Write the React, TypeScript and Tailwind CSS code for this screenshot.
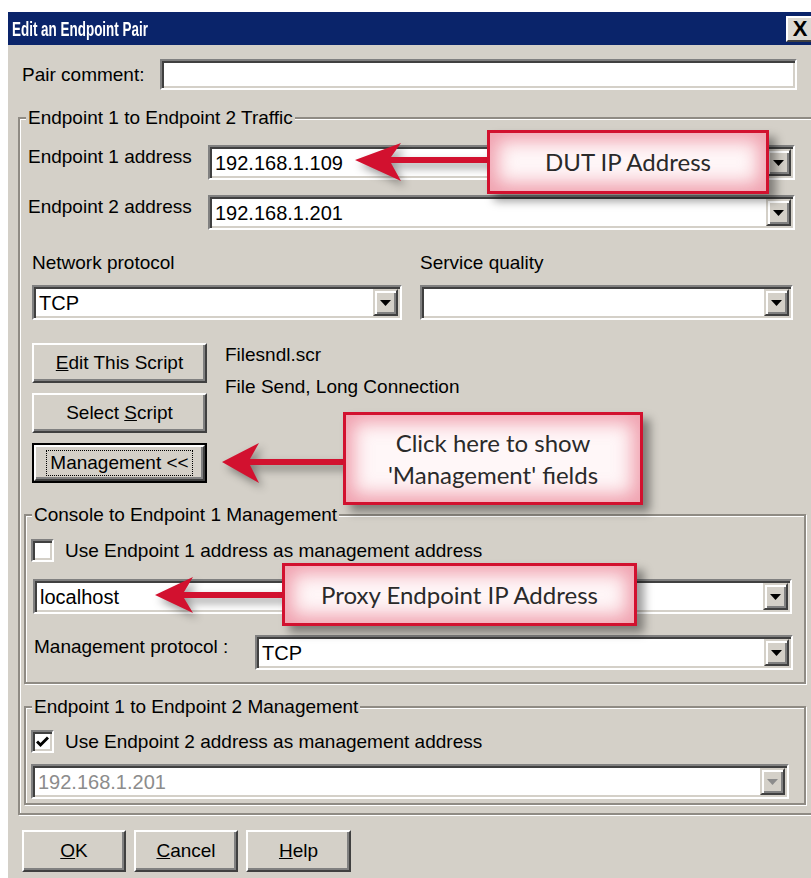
import React from "react";

type Kids = { children?: React.ReactNode; className?: string };

// white, sunken edit area with the classic two-tone bevel
function Sunken({ children, className = "" }: Kids) {
  return (
    <div
      className={`flex items-stretch bg-white p-[2px] border-2 border-t-[#808080] border-l-[#808080] border-b-white border-r-white shadow-[inset_2px_2px_0_#404040,inset_-2px_-2px_0_#d4d0c8] ${className}`}
    >
      {children}
    </div>
  );
}

function DropButton({ disabled }: { disabled?: boolean }) {
  return (
    <div className="ml-auto flex w-[25px] items-center justify-center border-2 border-t-[#d4d0c8] border-l-[#d4d0c8] border-b-[#404040] border-r-[#404040] bg-[#d4d0c8] shadow-[inset_2px_2px_0_#fff,inset_-2px_-2px_0_#808080]">
      <svg width="11" height="6" viewBox="0 0 11 6">
        <path d="M0 0h11L5.5 6z" fill={disabled ? "#8c8c8c" : "#000"} />
      </svg>
    </div>
  );
}

function Combo({
  value,
  className = "",
  disabled,
}: {
  value?: string;
  className?: string;
  disabled?: boolean;
}) {
  return (
    <Sunken className={`h-[35px] ${className}`}>
      <span
        className={`flex flex-1 items-center pl-[3px] text-[20px] ${
          disabled ? "text-[#8c8c8c]" : "text-black"
        }`}
      >
        {value}
      </span>
      <DropButton disabled={disabled} />
    </Sunken>
  );
}

function Btn({
  children,
  className = "",
  isDefault,
}: Kids & { isDefault?: boolean }) {
  return (
    <div className={`${isDefault ? "border-2 border-black" : ""} ${className}`}>
      <div className="flex h-full items-center justify-center border-2 border-t-white border-l-white border-b-[#404040] border-r-[#404040] bg-[#d4d0c8] shadow-[inset_-2px_-2px_0_#808080]">
        {isDefault ? (
          <span className="border border-dotted border-black px-[3px] leading-[24px]">
            {children}
          </span>
        ) : (
          children
        )}
      </div>
    </div>
  );
}

function Check({ checked }: { checked?: boolean }) {
  return (
    <div className="flex h-[23px] w-[23px] shrink-0 items-center justify-center border-2 border-t-[#808080] border-l-[#808080] border-b-white border-r-white bg-white shadow-[inset_2px_2px_0_#404040,inset_-2px_-2px_0_#d4d0c8]">
      {checked && (
        <svg width="13" height="12" viewBox="0 0 13 12">
          <path d="M1 5.5l3.5 3.5L12 1.5" fill="none" stroke="#000" strokeWidth="3" />
        </svg>
      )}
    </div>
  );
}

function Group({
  title,
  children,
  className = "",
}: Kids & { title: string }) {
  return (
    <fieldset
      className={`border-2 border-[#8f8b84] shadow-[inset_1px_1px_0_#fff,1px_1px_0_#fff] ${className}`}
    >
      <legend className="ml-[6px] bg-[#d4d0c8] px-[2px] leading-[22px]">{title}</legend>
      {children}
    </fieldset>
  );
}

function Callout({ children, className = "" }: Kids) {
  return (
    <div
      className={`absolute flex flex-col items-center justify-center border-[3px] border-[#d2112f] bg-[#fff7f8] font-['Lato',sans-serif] text-[24px] leading-[32px] text-[#2a2a2a] shadow-[inset_0_0_18px_8px_rgba(226,78,104,0.5),7px_7px_9px_rgba(0,0,0,0.4)] ${className}`}
    >
      {children}
    </div>
  );
}

export default function App() {
  return (
    <div className="relative h-[878px] w-[811px] overflow-hidden bg-white font-['Liberation_Sans',Arial,sans-serif] text-[19px] leading-[22px] text-black">
      <div className="ml-[8px] mt-[12px] w-[812px] bg-[#d4d0c8] pb-[40px]">
        {/* caption */}
        <div className="flex h-[33px] items-center bg-[#0a246a] pl-[4px] pr-[6px]">
          <span className="inline-block origin-left scale-x-[0.64] whitespace-nowrap text-[21px] font-bold text-white">
            Edit an Endpoint Pair
          </span>
          <div className="ml-auto flex h-[26px] w-[28px] items-center justify-center border-2 border-t-white border-l-white border-b-[#404040] border-r-[#404040] bg-[#dcd9d2] text-[22px] font-bold">
            X
          </div>
        </div>

        <div className="ml-[14px] mr-[23px] mt-[14px] flex h-[31px] items-center">
          <span className="w-[138px]">Pair comment:</span>
          <Sunken className="h-[31px] flex-1" />
        </div>

        <Group title="Endpoint 1 to Endpoint 2 Traffic" className="ml-[10px] mt-[17px] w-[800px] pb-[8px]">
          <div className="mt-[16px] flex items-start pl-[8px]">
            <span className="w-[180px] pt-[1px]">Endpoint 1 address</span>
            <Combo value="192.168.1.109" className="w-[587px]" />
          </div>
          <div className="mt-[15px] flex items-start pl-[8px]">
            <span className="w-[180px] pt-[1px]">Endpoint 2 address</span>
            <Combo value="192.168.1.201" className="w-[587px]" />
          </div>

          <div className="ml-[12px] mt-[22px] grid w-[761px] grid-cols-[370px_373px] gap-x-[18px]">
            <span>Network protocol</span>
            <span>Service quality</span>
            <Combo value="TCP" className="mt-[11px]" />
            <Combo className="mt-[11px]" />
          </div>

          <div className="ml-[12px] mt-[23px] flex gap-[18px]">
            <div className="flex w-[175px] flex-col gap-[10px]">
              <Btn className="h-[40px]">
                <span>
                  <u>E</u>dit This Script
                </span>
              </Btn>
              <Btn className="h-[40px]">
                <span>
                  Select <u>S</u>cript
                </span>
              </Btn>
              <Btn className="h-[40px]" isDefault>
                Management &lt;&lt;
              </Btn>
            </div>
            <div className="-mt-[4px] leading-[32px]">
              <div>Filesndl.scr</div>
              <div>File Send, Long Connection</div>
            </div>
          </div>

          <Group title="Console to Endpoint 1 Management" className="ml-[4px] mt-[21px] w-[782px] pb-[12px]">
            <div className="ml-[5px] mt-[13px] flex items-center gap-[11px]">
              <Check />
              <span>Use Endpoint 1 address as management address</span>
            </div>
            <Combo value="localhost" className="ml-[7px] mt-[17px] w-[759px]" />
            <div className="ml-[8px] mt-[21px] flex items-start">
              <span className="w-[221px] pt-[1px]">Management protocol :</span>
              <Combo value="TCP" className="w-[538px]" />
            </div>
          </Group>

          <Group title="Endpoint 1 to Endpoint 2 Management" className="ml-[4px] mt-[12px] w-[782px] pb-[4px]">
            <div className="ml-[5px] mt-[12px] flex items-center gap-[11px]">
              <Check checked />
              <span>Use Endpoint 2 address as management address</span>
            </div>
            <Combo value="192.168.1.201" disabled className="ml-[5px] mt-[11px] w-[758px]" />
          </Group>
        </Group>

        <div className="ml-[14px] mt-[15px] flex gap-[8px]">
          <Btn className="h-[42px] w-[104px]">
            <span>
              <u>O</u>K
            </span>
          </Btn>
          <Btn className="h-[42px] w-[104px]">
            <span>
              <u>C</u>ancel
            </span>
          </Btn>
          <Btn className="h-[42px] w-[105px]">
            <span>
              <u>H</u>elp
            </span>
          </Btn>
        </div>
      </div>

      {/* annotation arrows */}
      <svg
        className="pointer-events-none absolute left-0 top-0 drop-shadow-[4px_5px_4px_rgba(0,0,0,0.4)]"
        width="811"
        height="878"
      >
        <g fill="#d2112f">
          <path d="M355 160L401 143L391 157H492V163H391L401 181Z" />
          <path d="M222 462L259 443L250 459H346V465H250L259 483Z" />
          <path d="M155 595L193 577L184 592H286V598H184L193 613Z" />
        </g>
      </svg>

      <Callout className="left-[487px] top-[130px] h-[64px] w-[282px]">DUT IP Address</Callout>
      <Callout className="left-[343px] top-[412px] h-[93px] w-[300px]">
        <span>Click here to show</span>
        <span>'Management' fields</span>
      </Callout>
      <Callout className="left-[282px] top-[563px] h-[63px] w-[355px]">Proxy Endpoint IP Address</Callout>
    </div>
  );
}
